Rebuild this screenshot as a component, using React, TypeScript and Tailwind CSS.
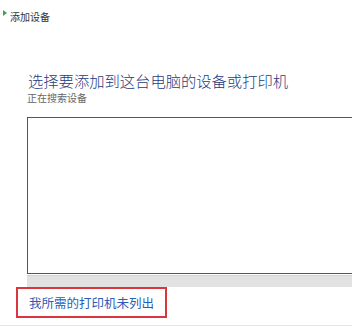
import React from "react";

const font = { fontFamily: '"Noto Sans CJK SC", "Noto Sans", sans-serif' };

const App: React.FC = () => {
  return (
    <main className="w-[352px] h-[330px] bg-white overflow-hidden flex flex-col" style={font}>
      {/* 标题栏 */}
      <div className="h-[34px] flex items-center pl-[3px]">
        <svg width="4" height="6" viewBox="0 0 4 6" className="mb-[9px]">
          <path d="M0 0 L4 3 L0 6 Z" fill="#3fa34d" />
        </svg>
        <span className="ml-[3px] text-[10px] leading-[12px] text-[#333]">添加设备</span>
      </div>

      {/* 主标题 */}
      <h1 className="mt-[37px] pl-[28px] text-[15.3px] leading-[18px] text-[#1f3b80] font-light whitespace-nowrap">
        选择要添加到这台电脑的设备或打印机
      </h1>
      <p className="mt-[3px] pl-[27px] text-[10px] leading-[12px] text-[#666]">正在搜索设备</p>

      {/* 设备列表 */}
      <div className="mt-[13px] ml-[27px] w-[340px] h-[157px] shrink-0 border border-[#555] bg-white" />
      <div className="mt-[1px] ml-[27px] w-[340px] h-[12px] shrink-0 bg-[#e2e2e2] border-t border-[#d2d2d2]" />

      {/* 链接 */}
      <div className="ml-[16px] w-[151px] h-[31px] shrink-0 border-2 border-[#d9363e] flex items-center pl-[11px]">
        <span className="text-[12.5px] leading-[14px] text-[#2a5db8] whitespace-nowrap">我所需的打印机未列出</span>
      </div>

      <div className="mt-[7px] h-[1px] shrink-0 bg-[#e6e6e6]" />
    </main>
  );
};

export default App;
